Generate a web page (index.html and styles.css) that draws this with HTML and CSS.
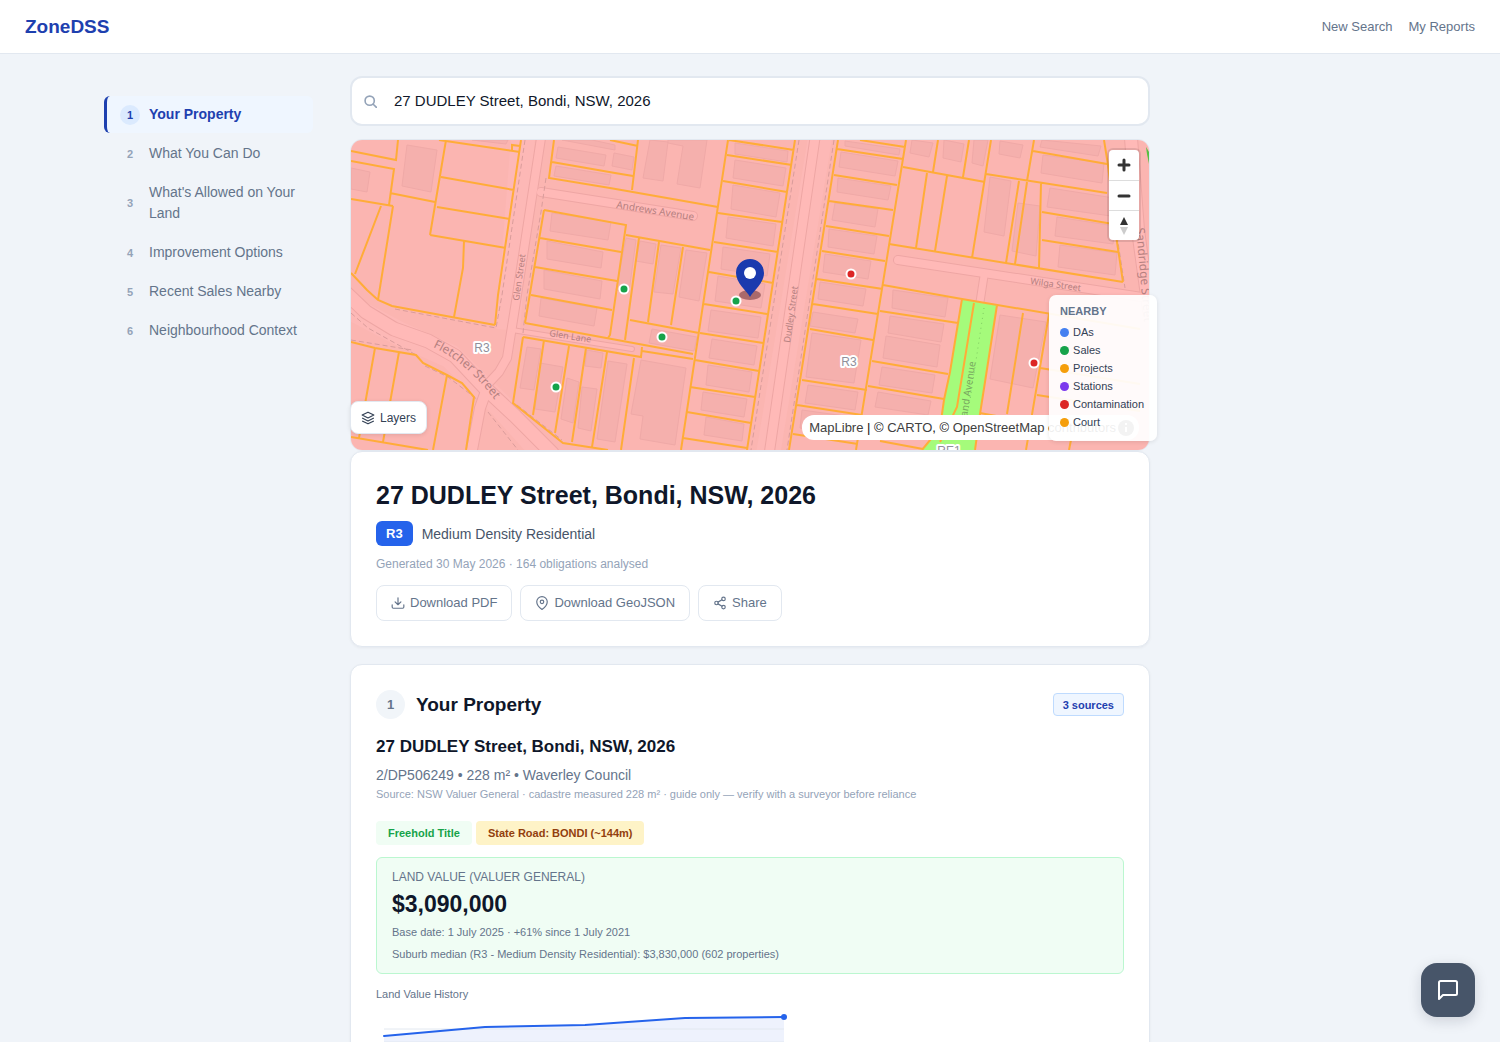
FILE: index.html
```html
<!DOCTYPE html>
<html lang="en">
<head>
<meta charset="utf-8">
<meta name="viewport" content="width=device-width, initial-scale=1">
<title>ZoneDSS</title>
<link rel="stylesheet" href="styles.css">
</head>
<body>
<header class="topbar">
  <a class="brand" href="#">ZoneDSS</a>
  <nav class="topnav">
    <a href="#">New Search</a>
    <a href="#">My Reports</a>
  </nav>
</header>

<div class="layout">
  <nav class="toc" aria-label="Report sections">
    <a class="toc-item active" href="#property"><span class="toc-num">1</span>Your Property</a>
    <a class="toc-item" href="#"><span class="toc-num">2</span>What You Can Do</a>
    <a class="toc-item" href="#"><span class="toc-num">3</span>What's Allowed on Your Land</a>
    <a class="toc-item" href="#"><span class="toc-num">4</span>Improvement Options</a>
    <a class="toc-item" href="#"><span class="toc-num">5</span>Recent Sales Nearby</a>
    <a class="toc-item" href="#"><span class="toc-num">6</span>Neighbourhood Context</a>
  </nav>

  <main class="report">
    <label class="search">
      <svg class="search-icon" viewBox="0 0 24 24" aria-hidden="true"><circle cx="10.5" cy="10.5" r="8.5"/><path d="M17 17l6 6"/></svg>
      <input type="text" aria-label="Address" value="27 DUDLEY Street, Bondi, NSW, 2026">
    </label>

    <section class="map" aria-label="Map">
      <svg class="map-canvas" viewBox="351 140 798 310" preserveAspectRatio="xMidYMid slice">
        <rect class="land" x="-200" y="100" width="1900" height="400"/>
        <defs>
          <path id="fletcher" d="M345 292L366 312 394 329 428 341 455 356 485 388 515 416 552 453"/>
          <path id="glen" d="M541 138L517 295 507 358 499 372 484 388"/>
          <path id="side" d="M485 394L480 408 471 455"/>
          <path id="andrews" d="M541 192L693 216"/>
          <path id="lane" d="M512 330L632 349"/>
          <path id="dudley" d="M815 138L769 455"/>
          <path id="wilga" d="M898 260L1155 299"/>
          <path id="branch" d="M984 276L980 302"/>
          <path id="sandridge" d="M1131 138L1138 230 1149 310"/>
          <path id="fletcher-label" d="M433 347Q470 364 500 407"/>
        </defs>
        <g class="verge">
          <path d="M345 305L400 334 450 356 500 405 545 455M523 138L508 330M820 138L768 455"/>
        </g>
        <g class="casing">
          <use href="#fletcher" stroke-width="15"/><use href="#glen" stroke-width="10"/><use href="#side" stroke-width="12"/>
          <use href="#andrews" stroke-width="10"/><use href="#lane" stroke-width="6"/><use href="#dudley" stroke-width="11"/>
          <use href="#wilga" stroke-width="10"/><use href="#branch" stroke-width="9"/><use href="#sandridge" stroke-width="14"/>
        </g>
        <g class="road">
          <use href="#fletcher" stroke-width="13"/><use href="#glen" stroke-width="8"/><use href="#side" stroke-width="10"/>
          <use href="#andrews" stroke-width="8"/><use href="#lane" stroke-width="4"/><use href="#dudley" stroke-width="9"/>
          <use href="#wilga" stroke-width="8"/><use href="#branch" stroke-width="7"/><use href="#sandridge" stroke-width="12"/>
        </g>
        <path id="houses" class="building" d="M407 145l30 5-6 42-29-6zM351 168l19 4-3 20-16-3zM472 140h36l-2 4zM558 147l48 8-2 11-48-8zM562 140h30l23 5v5zM556 166l55 9-2 10-55-9zM552 213l59 9-3 18-58-9zM547 241l56 11-2 16-54-9zM544 270l58 11-2 18-56-10zM541 298l56 10-3 18-55-10zM527 347l14 2-7 41-14-2zM540 363l23 4-8 45-20-3zM567 378l12 4-6 41-12-4zM587 350l16 3-2 15-16-2zM582 387l15 2-6 42-13-3zM608 361l19 3-12 78-18-3zM650 140l18 2-5 39-20-3zM668 140h39l-7 48-23-4 6-38-15-3zM614 153l20 4-2 13-20-4zM735 143l53 8-1 11-52-8zM735 160l51 8-3 18-50-8zM733 185l47 8-4 24-45-8zM728 217l48 7-3 22-47-8zM723 247l47 7-3 22-46-7zM718 276l47 8-4 24-46-7zM626 238l10 2-7 52-13-2zM640 241l16 3-3 20-17-3zM661 245l20 3-8 46-19-2zM686 250l21 3-8 48-20-4zM845 141l55 8-1 6-54-9zM841 152l57 9-3 15-56-9zM838 178l53 8-3 14-51-8zM835 203l43 6-3 18-43-7zM829 229l48 7-3 18-46-7zM825 254l46 7-3 18-45-7zM820 282l46 7-3 17-45-7zM711 310l50 7-3 21-50-7zM712 339l45 7-3 19-45-7zM708 365l44 7-3 20-43-7zM703 392l44 7-3 18-43-7zM706 417l38 7-2 17-38-6zM641 360l45 8-11 77-35-6 3-23-12-2zM652 329l45 8-3 14-45-8zM813 312l45 7-3 14-45-7zM812 333l49 7-7 43-48-6zM808 385l50 7-3 18-50-7zM802 410l50 7-3 18-49-7zM912 140l21 3-4 14-19-4zM944 140l20 4-3 18-18-4zM974 140h14l-5 26-11-3zM1000 141l23 4-3 13-21-4zM1042 140l59 6-3 10-58-9zM1043 155l61 8-2 20-61-10zM990 177l21 4-7 55-20-4zM1018 203l22 3-4 50-24-5zM1050 188l64 10-3 18-64-9zM1057 217l58 9-2 18-58-8zM1060 245l57 8-2 22-57-8zM893 290l55 8-3 19-53-9zM890 316l54 8-3 18-53-9zM886 336l54 9-3 22-54-9zM882 367l53 8-3 18-53-8zM878 392l53 9-3 14-53-8zM1000 315l46 7-13 66-43-9z"/>
        <g class="footway">
          <path d="M799 140L751 450M834 140L787 450M525 140L502 295 496 328 395 309M546 178L541 212 527 295 523 333M351 313L368 328 402 347 418 356M425 366L448 377 478 400M351 340L412 350M488 412L518 450M517 405L562 440M1108 165L1118 242 1125 288"/>
        </g>
        <path class="park" d="M962 299L997 305 980 414 975 450 922 450 940 428 944 400 950 372z"/>
        <path class="park-track" d="M984 308L970 400 962 440"/>
        <g class="parcel">
          <path d="M351 151L396 160 398 140M351 161L394 169 389 205M390 193L435 202M351 199L393 206M381 206L355 274M393 206L378 300M446 140L430 235M439 140L520 152M512 150v-5l8 1M521 140L498 295 495 325M441 177L514 190M437 207L510 219M430 235L506 248M464 241L463 268 454 317M351 273L367 290 378 300 392 306 495 325"/>
          <path d="M351 342L375 348 416 355 423 363 447 375 462 383 474 397 466 450M375 348L359 438M399 352L383 442M447 375L433 450M351 437L428 450"/>
          <path d="M554 140L549 178 610 188 718 207M552 162L615 173 633 176M544 210L626 225 610 335 608 338M544 210L525 323M540 238L621 252M535 267L617 281M531 295L612 310M525 323L693 354M523 337L641 357 642 347M642 351L693 359M523 337L513 403 563 443 608 450M544 340L533 415M569 346L555 433M586 348L572 442M607 352L592 447M610 140L638 146M638 140L632 190"/>
          <path d="M728 140L681 450M795 140L747 450M729 140L794 150M727 155L792 165M723 181L787 192M718 213L782 222M714 242L778 252M709 272L773 283M704 304L767 314M700 333L763 343M695 360L759 371M690 387L755 397M687 412L751 423M683 438L747 448M626 235L710 250M639 238L625 340M659 242L648 322M683 247L671 325M630 320L699 333M634 358L621 450"/>
          <path d="M838 140L789 450M906 140L856 450M860 140L905 147M837 149L903 159M834 175L897 185M829 201L893 210M826 226L889 236M822 251L885 261M817 279L883 289M813 304L878 314M810 329L873 340M802 380L867 390M797 405L862 415M793 434L858 444"/>
          <path d="M903 167L985 182M938 140L933 172M969 140L963 177M991 140L972 258M927 173L916 248M947 176L935 251M889 244L1123 282M986 174L1107 193M1034 140L1027 181M1033 151L1107 164M1019 181L1006 263M1027 182L1015 264M1041 183L1039 268M1042 212L1113 224M1042 240L1118 252M1104 140L1108 165 1117 242 1123 282"/>
          <path d="M883 285L962 299 1140 329M880 311L958 323M872 361L948 374M868 386L944 399M880 441L923 449M962 299L950 372 944 400 940 428 922 450M997 305L980 414 975 450M974 303L957 407 940 442M1023 313L1007 414M1049 314L1026 450M1040 368L1140 384M1037 395L1140 411M980 413L1007 418M1071 440L1069 450"/>
        </g>
        <path d="M1146 147l3 5v12l-2-10z" fill="#56c043"/>
        <g class="street">
          <text transform="translate(616 208) rotate(9)">Andrews Avenue</text>
          <text class="narrow" transform="translate(519 301) rotate(-82)">Glen Street</text>
          <text class="narrow" transform="translate(790 343) rotate(-82)">Dudley Street</text>
          <text class="narrow" transform="translate(549 336) rotate(9)">Glen Lane</text>
          <text class="narrow" transform="translate(1030 284) rotate(8)">Wilga Street</text>
          <text class="wide" transform="translate(1136 228) rotate(85)">Sandridge Street</text>
          <text class="narrow park-name" transform="translate(967 417) rotate(-81)">and Avenue</text>
          <text class="wide"><textPath href="#fletcher-label">Fletcher Street</textPath></text>
        </g>
        <g class="zone">
          <text x="482" y="352">R3</text>
          <text x="849" y="366">R3</text>
          <text x="949" y="455">RE1</text>
        </g>
        <ellipse cx="750" cy="295" rx="11" ry="5" fill="#6b2f35" opacity=".55"/>
        <g class="spot">
          <circle class="sale" cx="624" cy="289" r="4.5"/><circle class="sale" cx="736" cy="301" r="4.5"/>
          <circle class="sale" cx="662" cy="337" r="4.5"/><circle class="sale" cx="556" cy="387" r="4.5"/>
          <circle class="contaminated" cx="851" cy="274" r="4.5"/><circle class="contaminated" cx="1034" cy="363" r="4.5"/>
        </g>
        <path d="M750 297C746 290 736 283 736 273a14 14 0 0 1 28 0C764 283 754 290 750 297z" fill="#1a3aae"/>
        <circle cx="750" cy="273" r="6" fill="#fff"/>
      </svg>

      <div class="zoomer">
        <button type="button" aria-label="Zoom in"><svg viewBox="0 0 30 30"><path d="M15 10v10M10 15h10"/></svg></button>
        <button type="button" aria-label="Zoom out"><svg viewBox="0 0 30 30"><path d="M10 15h10"/></svg></button>
        <button type="button" aria-label="Reset bearing"><svg viewBox="0 0 30 30"><path class="north" d="M11 14l4-8 4 8z"/><path class="south" d="M11 16l4 8 4-8z"/></svg></button>
      </div>

      <button type="button" class="layers">
        <svg viewBox="0 0 24 24" aria-hidden="true"><path d="M12 2L2 7l10 5 10-5zM2 12l10 5 10-5M2 17l10 5 10-5"/></svg>
        Layers
      </button>

      <div class="attribution">
        <span><a href="#">MapLibre</a> | © <a href="#">CARTO</a>, © <a href="#">OpenStreetMap</a> contributors</span>
        <svg class="info" viewBox="0 0 16 16" aria-hidden="true"><circle cx="8" cy="8" r="8"/><path d="M7 7h2v5H7zM7 3h2v2H7z"/></svg>
      </div>

      <div class="legend">
        <h2>NEARBY</h2>
        <ul>
          <li class="das">DAs</li>
          <li class="sales">Sales</li>
          <li class="projects">Projects</li>
          <li class="stations">Stations</li>
          <li class="contamination">Contamination</li>
          <li class="court">Court</li>
        </ul>
      </div>
    </section>

    <section class="card summary">
      <h1>27 DUDLEY Street, Bondi, NSW, 2026</h1>
      <p class="zoning"><span class="zone-badge">R3</span>Medium Density Residential</p>
      <p class="generated">Generated 30 May 2026 · 164 obligations analysed</p>
      <div class="actions">
        <button type="button"><svg viewBox="0 0 24 24" aria-hidden="true"><path d="M2 15v4a2 2 0 0 0 2 2h16a2 2 0 0 0 2-2v-4M7 10l5 5 5-5M12 15V3"/></svg>Download PDF</button>
        <button type="button"><svg viewBox="0 0 24 24" aria-hidden="true"><path d="M21 10c0 7-9 13-9 13s-9-6-9-13a9 9 0 0 1 18 0z"/><circle cx="12" cy="10" r="3"/></svg>Download GeoJSON</button>
        <button type="button"><svg viewBox="0 0 24 24" aria-hidden="true"><circle cx="18" cy="5" r="3"/><circle cx="6" cy="12" r="3"/><circle cx="18" cy="19" r="3"/><path d="M8.6 13.5l6.8 4M15.4 6.5l-6.8 4"/></svg>Share</button>
      </div>
    </section>

    <section class="card property" id="property">
      <header class="section-head">
        <span class="section-num">1</span>
        <h2>Your Property</h2>
        <button type="button" class="sources">3 sources</button>
      </header>
      <h3>27 DUDLEY Street, Bondi, NSW, 2026</h3>
      <p class="lot">2/DP506249 • 228 m² • Waverley Council</p>
      <p class="origin">Source: NSW Valuer General · cadastre measured 228 m² · guide only — verify with a surveyor before reliance</p>
      <div class="tags">
        <span class="tag title-tag">Freehold Title</span>
        <span class="tag road-tag">State Road: BONDI (~144m)</span>
      </div>
      <div class="value">
        <p class="value-label">LAND VALUE (VALUER GENERAL)</p>
        <p class="value-amount">$3,090,000</p>
        <p>Base date: 1 July 2025 · +61% since 1 July 2021</p>
        <p>Suburb median (R3 - Medium Density Residential): $3,830,000 (602 properties)</p>
      </div>
      <p class="chart-title">Land Value History</p>
      <svg class="chart" viewBox="0 0 418 100" role="img" aria-label="Land value by year">
        <path d="M8 29L109 20 209 18 309 11 408 10V90H8z" fill="#eef2fd"/>
        <path d="M8 22h400M8 35h400M8 58h400M8 81h400" stroke="#e2e8f0"/>
        <path d="M8 29L109 20 209 18 309 11 408 10" fill="none" stroke="#2563eb" stroke-width="2" stroke-linecap="round" stroke-linejoin="round"/>
        <circle cx="408" cy="10" r="3" fill="#2563eb"/>
      </svg>
    </section>
  </main>
</div>

<button type="button" class="chat" aria-label="Open chat">
  <svg viewBox="0 0 24 24"><path d="M21 15.500a1.500 1.500 0 0 1-1.500 1.500H7l-4 4V4.500a1.500 1.500 0 0 1 1.500-1.500h15a1.500 1.500 0 0 1 1.500 1.500z"/></svg>
</button>
</body>
</html>
```
FILE: styles.css
```css
* { box-sizing: border-box; }

body {
  margin: 0;
  background: #f0f4f9;
  color: #0f172a;
  font-family: "Liberation Sans", Arial, sans-serif;
  font-size: 13px;
  line-height: 20px;
}

h1, h2, h3, p, ul { margin: 0; padding: 0; }
ul { list-style: none; }
a { color: inherit; text-decoration: none; }
button, input { font: inherit; color: inherit; }
button { cursor: pointer; }

.topbar {
  display: flex;
  align-items: center;
  justify-content: space-between;
  height: 54px;
  padding: 0 25px;
  background: #fff;
  border-bottom: 1px solid #e2e8f0;
}
.brand { color: #1e40af; font-size: 19px; font-weight: 700; }
.topnav { display: flex; gap: 16px; color: #64748b; }

.layout {
  display: grid;
  grid-template-columns: minmax(0, 1fr) minmax(0, 800px) minmax(0, 1fr);
}

.toc {
  justify-self: end;
  display: flex;
  flex-direction: column;
  gap: 2px;
  width: 209px;
  margin: 42px 37px 0 0;
}
.toc-item {
  display: flex;
  align-items: center;
  gap: 9px;
  padding: 8px 13px;
  border-left: 3px solid transparent;
  border-radius: 6px;
  color: #64748b;
  font-size: 14px;
  line-height: 21px;
}
.toc-num {
  flex: none;
  width: 20px;
  height: 20px;
  border-radius: 50%;
  color: #94a3b8;
  font-size: 11px;
  font-weight: 700;
  line-height: 20px;
  text-align: center;
}
.toc-item.active { background: #eff6ff; border-color: #1e40af; color: #1e40af; font-weight: 700; }
.active .toc-num { background: #dbeafe; color: #1e40af; }

.report { display: flex; flex-direction: column; padding-top: 22px; }

.search {
  display: flex;
  align-items: center;
  height: 50px;
  margin-bottom: 13px;
  padding: 0 12px;
  background: #fff;
  border: 2px solid #e2e8f0;
  border-radius: 12px;
}
.search-icon { width: 13px; height: 13px; fill: none; stroke: #94a3b8; stroke-width: 3; stroke-linecap: round; }
.search input { flex: 1; margin-left: 15px; padding: 0 2px; border: 0; outline: 0; background: none; font-size: 15px; }

.map { position: relative; border: 1px solid #e2e8f0; border-radius: 12px; }
.map-canvas { display: block; width: 100%; height: 310px; border-radius: 11px; }
.land { fill: #fbb5b1; }
.verge path { fill: none; stroke: #fdb8b6; stroke-width: 24; }
.casing, .road { fill: none; stroke-linecap: round; stroke-linejoin: round; }
.casing { stroke: #eea6a4; }
.road { stroke: #ffb9b7; }
.building { fill: #f5b0ad; stroke: #efa9a7; stroke-width: 1; }
.footway { fill: none; stroke: #d99c9b; stroke-width: 1; stroke-dasharray: 5 3; }
.park { fill: #a5fb7b; }
.park-track { fill: none; stroke: #7fcb62; stroke-dasharray: 1 4; }
.parcel { fill: none; stroke: #ffac38; stroke-width: 2; }
.street { fill: #b58080; font-family: "Noto Sans", sans-serif; font-size: 10px; }
.street .narrow { font-size: 9px; }
.street .wide { font-size: 12px; }
.street .park-name { fill: #79a860; font-size: 10px; }
.zone { fill: #8f8f9b; stroke: #fff; stroke-width: 4; stroke-linejoin: round; paint-order: stroke; font-family: "Liberation Sans", sans-serif; font-size: 12px; text-anchor: middle; }
.spot { stroke: #fff; stroke-width: 2; }
.sale { fill: #16a34a; }
.contaminated { fill: #dc2626; }

.zoomer {
  position: absolute;
  top: 10px;
  right: 10px;
  width: 30px;
  background: #fff;
  border-radius: 4px;
  box-shadow: 0 0 0 2px rgba(0, 0, 0, .1);
}
.zoomer button { display: block; width: 30px; height: 30px; padding: 0; border: 0; background: none; }
.zoomer button + button { border-top: 1px solid #ddd; }
.zoomer svg { display: block; fill: none; stroke: #333; stroke-width: 3; stroke-linecap: round; }
.zoomer .north { fill: #333; stroke: none; }
.zoomer .south { fill: #ccc; stroke: none; }

.layers {
  position: absolute;
  left: -1px;
  bottom: 16px;
  display: flex;
  align-items: center;
  gap: 5px;
  height: 33px;
  padding: 0 10px;
  background: #fff;
  border: 1px solid #e2e8f0;
  border-radius: 8px;
  box-shadow: 0 1px 4px rgba(0, 0, 0, .1);
  color: #334155;
  font-size: 12px;
}
.layers svg { width: 14px; height: 14px; fill: none; stroke: currentColor; stroke-width: 2; stroke-linejoin: round; }

.attribution {
  position: absolute;
  right: 10px;
  bottom: 10px;
  display: flex;
  align-items: center;
  gap: 2px;
  height: 25px;
  padding: 0 5px 0 7px;
  background: #fff;
  border-radius: 12px;
  color: #111;
}
.attribution a { color: #404040; }
.info { width: 16px; height: 16px; fill: #555; }
.info path { fill: #fff; }

.legend {
  position: absolute;
  right: -8px;
  bottom: 9px;
  padding: 7px 13px 10px 11px;
  background: rgba(255, 255, 255, .93);
  border-radius: 7px;
  box-shadow: 0 1px 4px rgba(0, 0, 0, .1);
  color: #334155;
  font-size: 11px;
  line-height: 18px;
}
.legend h2 { margin-bottom: 3px; color: #64748b; font-size: 11px; line-height: 18px; }
.legend li { display: flex; align-items: center; gap: 4px; }
.legend li::before { content: ""; width: 9px; height: 9px; border-radius: 50%; background: var(--dot); }
.das { --dot: #4680f0; }
.sales { --dot: #16a34a; }
.projects, .court { --dot: #f59e0b; }
.stations { --dot: #7c3aed; }
.contamination { --dot: #dc2626; }

.card {
  padding: 25px;
  background: #fff;
  border: 1px solid #e2e8f0;
  border-radius: 12px;
  box-shadow: 0 1px 3px rgba(15, 23, 42, .05);
}
.summary { margin-bottom: 17px; }
h1 { font-size: 25px; line-height: 36px; }
.zoning { display: flex; align-items: center; gap: 9px; margin-top: 8px; color: #475569; font-size: 14px; }
.zone-badge { padding: 0 10px; background: #2563eb; border-radius: 6px; color: #fff; font-size: 13px; font-weight: 700; line-height: 25px; }
.generated { margin-top: 8px; color: #94a3b8; font-size: 12px; }
.actions { display: flex; flex-wrap: wrap; gap: 8px; margin-top: 11px; }
.actions button {
  display: flex;
  align-items: center;
  gap: 5px;
  height: 36px;
  padding: 0 14px;
  background: #fff;
  border: 1px solid #e2e8f0;
  border-radius: 8px;
  color: #64748b;
}
.actions svg { width: 14px; height: 14px; fill: none; stroke: currentColor; stroke-width: 2; stroke-linecap: round; stroke-linejoin: round; }

.section-head { display: flex; align-items: center; gap: 11px; }
.section-num { width: 29px; height: 29px; background: #f1f5f9; border-radius: 50%; color: #64748b; font-weight: 700; line-height: 29px; text-align: center; }
.section-head h2 { flex: 1; font-size: 19px; }
.sources { height: 23px; padding: 0 9px; background: #eff6ff; border: 1px solid #bfdbfe; border-radius: 4px; color: #1e40af; font-size: 11px; font-weight: 700; }
h3 { margin-top: 15px; font-size: 17px; line-height: 26px; }
.lot { margin-top: 5px; color: #64748b; font-size: 14px; }
.origin { color: #94a3b8; font-size: 11px; line-height: 18px; }
.tags { display: flex; gap: 4px; margin-top: 18px; }
.tag { padding: 0 12px; border-radius: 4px; font-size: 11px; font-weight: 700; line-height: 24px; }
.title-tag { background: #f0fdf4; color: #16a34a; }
.road-tag { background: #fef3c7; color: #92400e; }
.value {
  display: grid;
  gap: 4px;
  margin-top: 12px;
  padding: 10px 15px;
  background: #f0fdf4;
  border: 1px solid #bbf7d0;
  border-radius: 6px;
  color: #64748b;
  font-size: 11px;
  line-height: 18px;
}
.value-label { font-size: 12px; }
.value-amount { color: #0f172a; font-size: 23px; font-weight: 700; line-height: 29px; }
.chart-title { margin-top: 11px; color: #64748b; font-size: 11px; line-height: 18px; }
.chart { display: block; width: 418px; max-width: 100%; margin-top: 4px; }

.chat {
  position: fixed;
  right: 25px;
  bottom: 25px;
  display: grid;
  place-items: center;
  width: 54px;
  height: 54px;
  padding: 0;
  background: #475569;
  border: 0;
  border-radius: 16px;
  box-shadow: 0 4px 14px rgba(15, 23, 42, .15);
}
.chat svg { width: 24px; height: 24px; fill: none; stroke: #fff; stroke-width: 2; stroke-linejoin: round; }
```
